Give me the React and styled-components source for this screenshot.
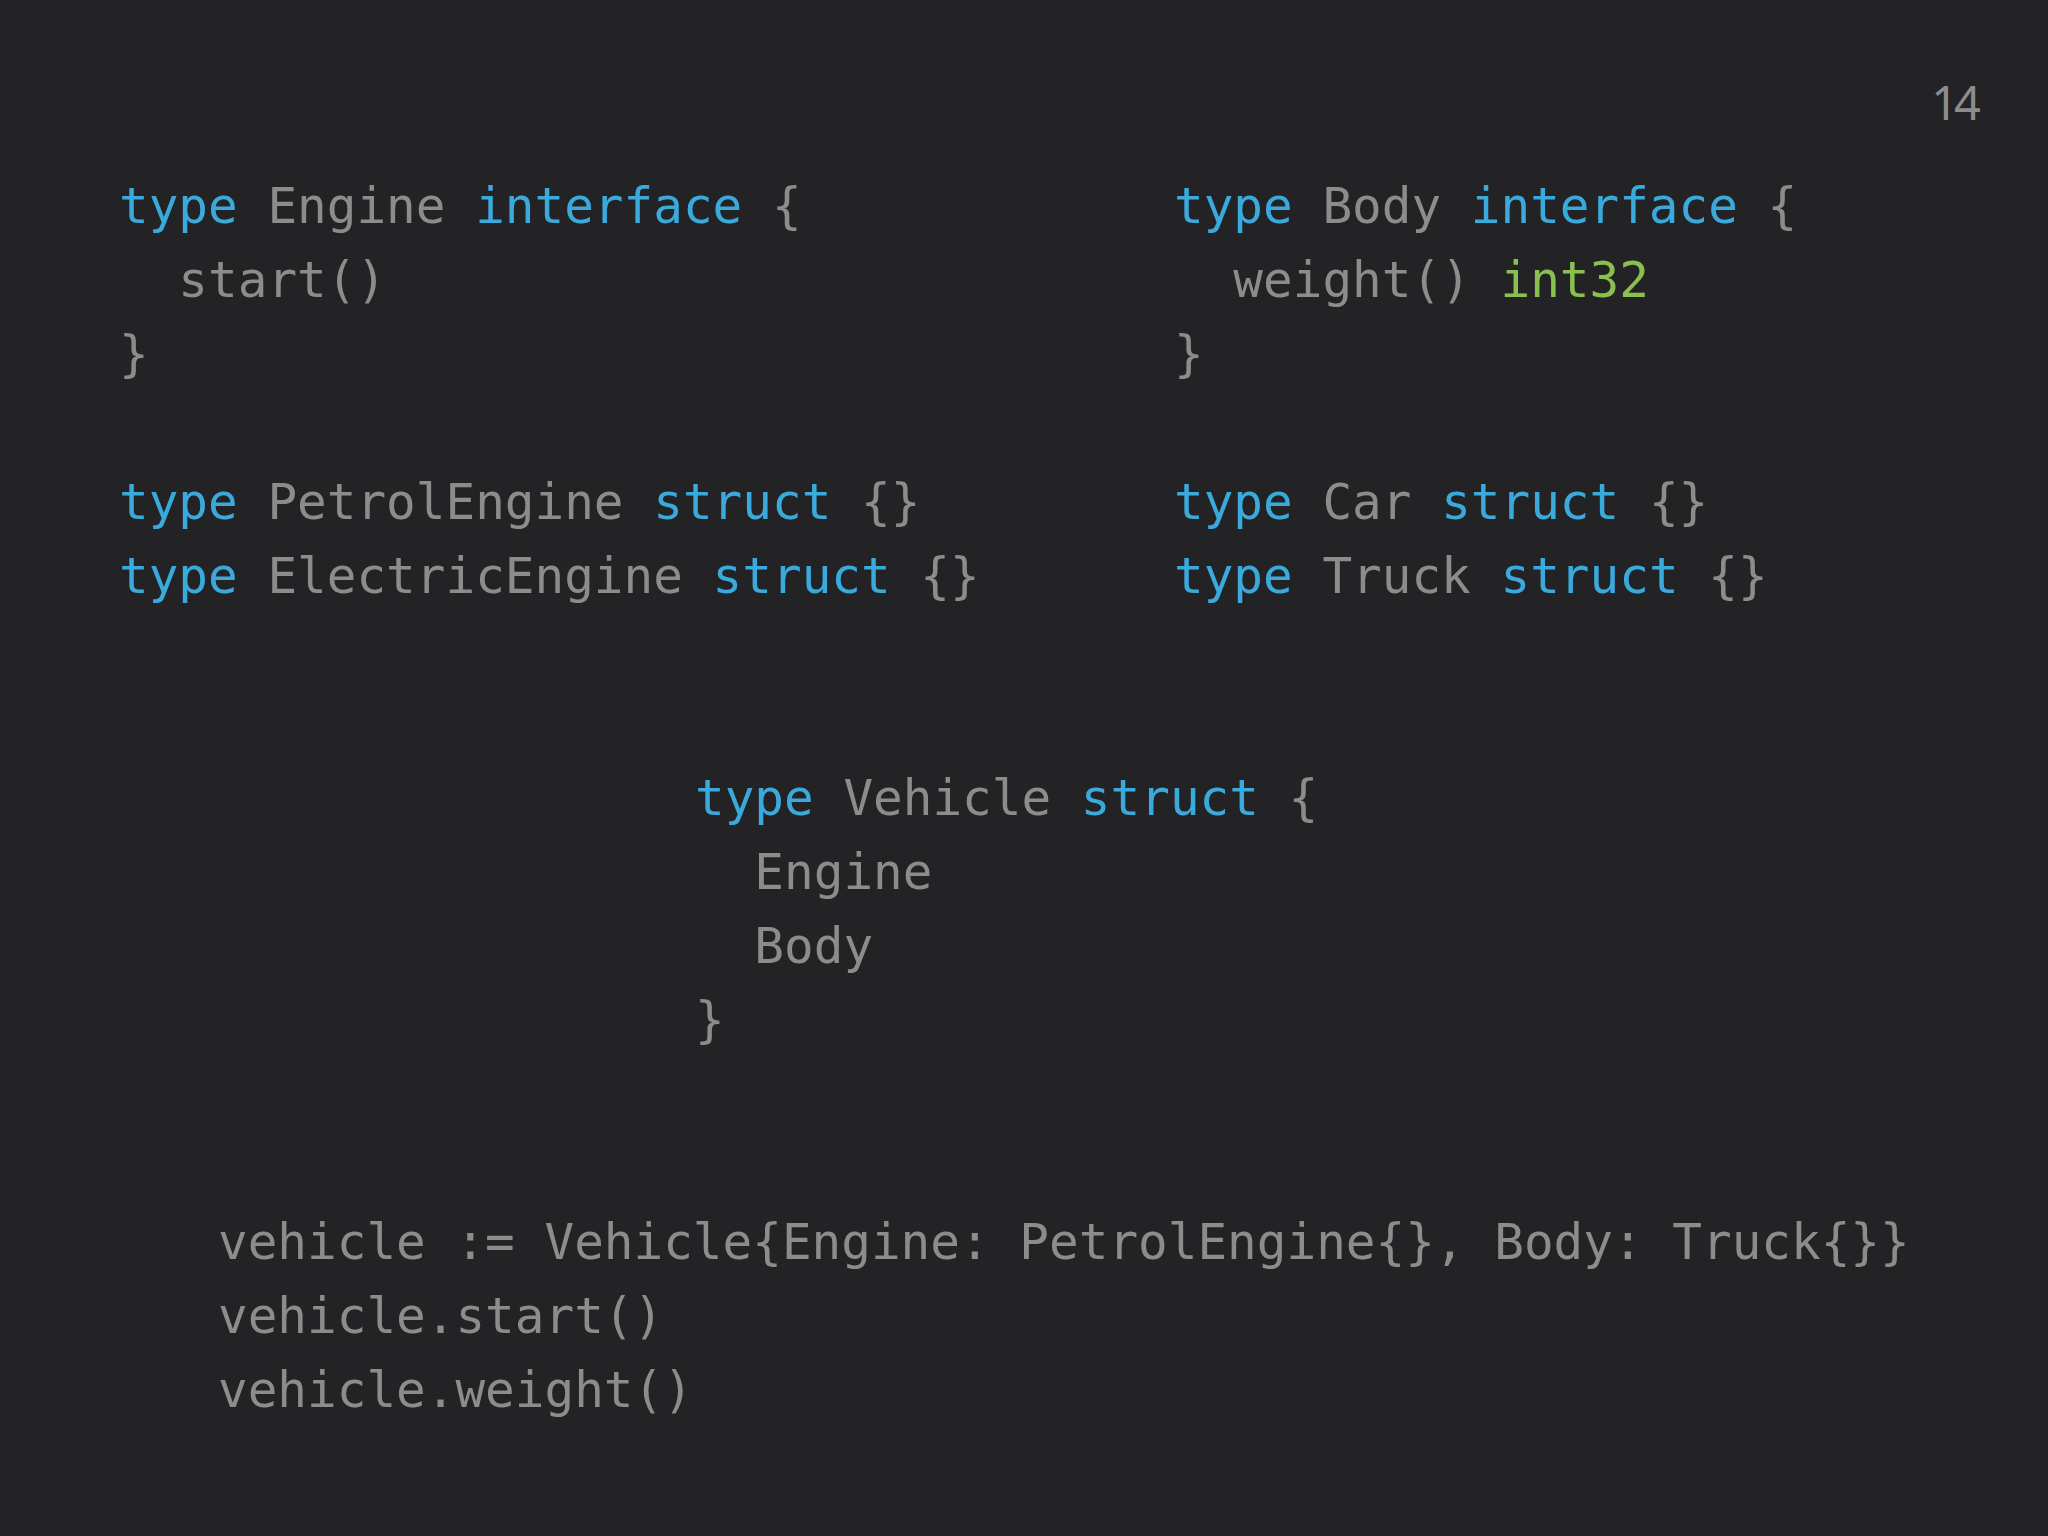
import React from "react";
import styled, { createGlobalStyle } from "styled-components";

const Global = createGlobalStyle`
  html, body { margin: 0; padding: 0; background: #232326; }
  #root { width: 2048px; height: 1536px; }
`;

const Slide = styled.main`
  width: 2048px;
  height: 1536px;
  box-sizing: border-box;
  background: #232326;
  display: flex;
  flex-direction: column;
  overflow: hidden;
`;

const Header = styled.header`
  height: 169px;
  box-sizing: border-box;
  display: flex;
  justify-content: flex-end;
  align-items: flex-start;
  padding: 79px 71px 0 0;
`;

const PageNumber = styled.div`
  font-family: "Noto Sans", "Open Sans", sans-serif;
  font-size: 47px;
  line-height: 47px;
  letter-spacing: -4px;
  color: #8c8c8c;
`;

const Code = styled.section`
  display: flex;
  flex-direction: column;
  padding-left: 119px;
  font-family: "DejaVu Sans Mono", "Liberation Mono", monospace;
  font-size: 49.3px;
  line-height: 74px;
  color: #8c8c8c;
`;

const Columns = styled.div`
  display: grid;
  grid-template-columns: 1055px 1fr;
`;

const Block = styled.pre`
  margin: 0;
  margin-left: ${(p) => p.$offset || 0}px;
  margin-top: ${(p) => (p.$skip || 0) * 74}px;
  font: inherit;
  white-space: pre;
`;

const Line = styled.div`
  height: 74px;
`;

const Kw = styled.span`
  color: #3aa9dc;
`;

const Builtin = styled.span`
  color: #8ac04f;
`;

export default function App() {
  return (
    <Slide>
      <Global />
      <Header>
        <PageNumber>14</PageNumber>
      </Header>
      <Code>
        <Columns>
          <Block>
            <Line><Kw>type</Kw> Engine <Kw>interface</Kw> {"{"}</Line>
            <Line>{"  start()"}</Line>
            <Line>{"}"}</Line>
            <Line />
            <Line><Kw>type</Kw> PetrolEngine <Kw>struct</Kw> {"{}"}</Line>
            <Line><Kw>type</Kw> ElectricEngine <Kw>struct</Kw> {"{}"}</Line>
          </Block>
          <Block>
            <Line><Kw>type</Kw> Body <Kw>interface</Kw> {"{"}</Line>
            <Line>{"  weight() "}<Builtin>int32</Builtin></Line>
            <Line>{"}"}</Line>
            <Line />
            <Line><Kw>type</Kw> Car <Kw>struct</Kw> {"{}"}</Line>
            <Line><Kw>type</Kw> Truck <Kw>struct</Kw> {"{}"}</Line>
          </Block>
        </Columns>
        <Block $offset={576} $skip={2}>
          <Line><Kw>type</Kw> Vehicle <Kw>struct</Kw> {"{"}</Line>
          <Line>{"  Engine"}</Line>
          <Line>{"  Body"}</Line>
          <Line>{"}"}</Line>
        </Block>
        <Block $offset={99} $skip={2}>
          <Line>{"vehicle := Vehicle{Engine: PetrolEngine{}, Body: Truck{}}"}</Line>
          <Line>{"vehicle.start()"}</Line>
          <Line>{"vehicle.weight()"}</Line>
        </Block>
      </Code>
    </Slide>
  );
}
